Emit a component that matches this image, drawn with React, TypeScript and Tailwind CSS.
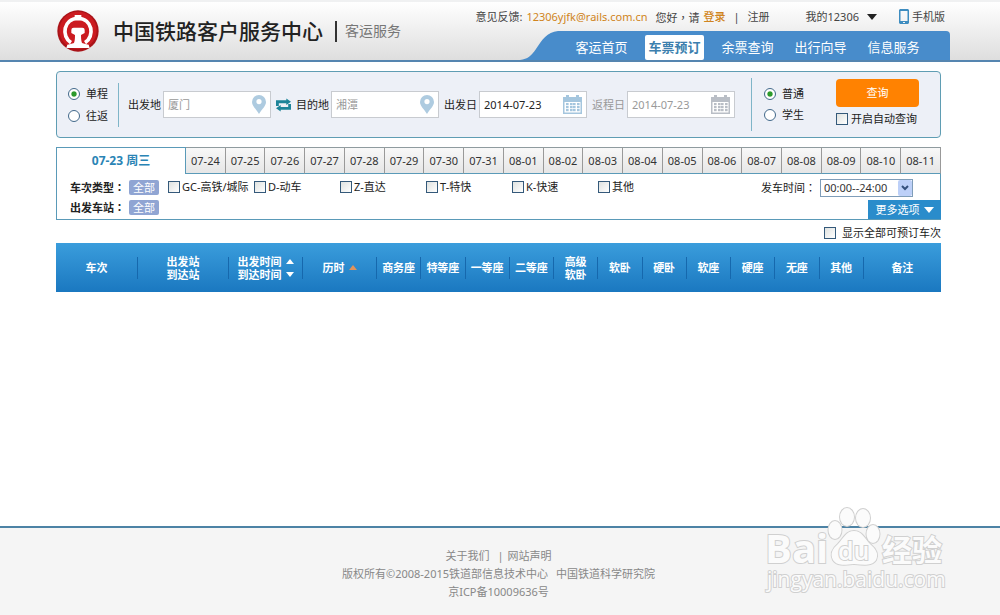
import { useState } from "react";
import type { ReactNode } from "react";

const navItems = ["客运首页", "车票预订", "余票查询", "出行向导", "信息服务"];

const dates = [
  "07-24", "07-25", "07-26", "07-27", "07-28", "07-29", "07-30",
  "07-31", "08-01", "08-02", "08-03", "08-04", "08-05", "08-06",
  "08-07", "08-08", "08-09", "08-10", "08-11",
];

const trainTypes = ["GC-高铁/城际", "D-动车", "Z-直达", "T-特快", "K-快速", "其他"];

const seats = [
  ["商务座"], ["特等座"], ["一等座"], ["二等座"], ["高级", "软卧"],
  ["软卧"], ["硬卧"], ["软座"], ["硬座"], ["无座"], ["其他"],
];

function Logo() {
  return (
    <svg viewBox="0 0 126 126" className="size-[42px] shrink-0" role="img" aria-label="中国铁路">
      <circle cx="63" cy="63" r="62" fill="#a91318" />
      <circle cx="63" cy="61" r="56" fill="#cb1b20" />
      <path d="M53 15h20v9H53z" fill="#fff" />
      <path d="M42 98C12 79 19 26 63 25C107 26 114 79 84 98" fill="none" stroke="#fff" strokeWidth="11" />
      <path d="M43 60q0-7 7-7h26q7 0 7 7v9l-11 6q0 17 3 24l20 6H31l20-6q3-7 3-24l-11-6z" fill="#fff" />
      <path d="M31 104h64l3 10H28z" fill="#fff" />
    </svg>
  );
}

function PinIcon() {
  return (
    <svg viewBox="0 0 14 20" className="h-5 w-[14px] shrink-0" fill="#aecbe0">
      <path fillRule="evenodd" d="M7 0a7 7 0 0 1 7 7c0 4-4 7-7 12C4 14 0 11 0 7a7 7 0 0 1 7-7zm0 4a2.600 2.600 0 1 0 0 5.200A2.600 2.600 0 0 0 7 4z" />
    </svg>
  );
}

function CalendarIcon({ muted = false }: { muted?: boolean }) {
  return (
    <svg viewBox="0 0 19 19" className="size-[19px] shrink-0" fill={muted ? "#b9bec6" : "#a5c6de"}>
      <path fillRule="evenodd" d="M0 2h3V0h3v2h7V0h3v2h3v17H0zM1.500 7v10.500h16V7z" />
      {[8, 11, 14].map((y) =>
        [3, 7, 10, 14].map((x) => <rect key={`${x}-${y}`} x={x} y={y} width="2.600" height="2.200" />)
      )}
    </svg>
  );
}

type FieldProps = {
  id: string;
  label: string;
  value: string;
  icon: ReactNode;
  labelClass?: string;
  inputClass?: string;
};

function Field({ id, label, value, icon, labelClass = "", inputClass = "text-[#999]" }: FieldProps) {
  return (
    <div className="flex min-w-0 flex-1 items-center gap-[2px]">
      <label htmlFor={id} className={`shrink-0 ${labelClass}`}>{label}</label>
      <div className="flex h-[27px] min-w-0 flex-1 items-center border border-[#c8cbd0] bg-white pr-1 pl-1">
        <input id={id} defaultValue={value} className={`w-full min-w-0 flex-1 bg-transparent outline-none ${inputClass}`} />
        {icon}
      </div>
    </div>
  );
}

function Radio({ name, label, checked = false }: { name: string; label: string; checked?: boolean }) {
  return (
    <label className="flex items-center gap-[6px]">
      <input
        type="radio"
        name={name}
        defaultChecked={checked}
        className="size-3 appearance-none rounded-full border border-[#41688a] bg-white checked:bg-[radial-gradient(circle,#2c9a2c_30%,#fff_45%)]"
      />
      {label}
    </label>
  );
}

function Checkbox({ label, className = "gap-[3px]" }: { label: string; className?: string }) {
  return (
    <label className={`flex items-center whitespace-nowrap ${className}`}>
      <input
        type="checkbox"
        className="size-3 shrink-0 appearance-none border border-[#34597a] bg-linear-to-br from-[#dfe2e0] to-white checked:bg-[#2c9a2c]"
      />
      {label}
    </label>
  );
}

function Header() {
  return (
    <header className="flex h-[62px] justify-between border-t-2 border-b-2 border-t-[#f0f1f2] border-b-[#5585b0] bg-linear-to-b from-white to-[#dedede] pr-[50px] pl-[57px]">
      <div className="flex items-center">
        <Logo />
        <h1 className="ml-[14px] text-[21px] leading-7 font-medium whitespace-nowrap text-[#222]">中国铁路客户服务中心</h1>
        <span className="ml-3 h-[21px] w-[2px] bg-[#333]" />
        <span className="ml-2 text-[14px] whitespace-nowrap text-[#777]">客运服务</span>
      </div>

      <div className="flex flex-col items-end justify-between">
        <div className="flex h-[29px] items-center pr-[5px] whitespace-nowrap text-[#444]">
          <span>意见反馈:</span>
          <a href="#mail" className="ml-1 text-[#d08420]">12306yjfk@rails.com.cn</a>
          <span className="ml-2 font-['Noto_Sans_CJK_TC',sans-serif]">您好，请</span>
          <a href="#login" className="ml-1 font-medium text-[#d08420]">登录</a>
          <span className="mx-2">|</span>
          <a href="#register">注册</a>
          <button type="button" className="ml-9 flex items-center gap-2">
            我的12306
            <svg viewBox="0 0 10 6" className="h-[6px] w-[10px]"><path d="M0 0h10L5 6z" fill="#222" /></svg>
          </button>
          <a href="#mobile" className="ml-[22px] flex items-center gap-[3px]">
            <svg viewBox="0 0 10 15" className="h-[15px] w-[10px]">
              <path fillRule="evenodd" d="M1 0h8l1 1v13l-1 1H1l-1-1V1zM1.500 2v10h7V2zM4 13h2v1H4z" fill="#3e8dc0" />
            </svg>
            手机版
          </a>
        </div>

        <nav className="flex h-[29px]">
          <svg viewBox="0 0 38 29" className="h-[29px] w-[38px]">
            <path d="M0 29C8 28 11 25 16 18C22 9 27 1 38 0V29z" fill="#488ccb" />
          </svg>
          <ul className="flex items-center rounded-tr bg-[#488ccb] pt-[3px] pr-5 pl-[7px] text-[13px]">
            {navItems.map((item, i) => (
              <li key={item} className="flex w-[73px] justify-center">
                <a
                  href="#nav"
                  className={i === 1 ? "rounded-xs bg-white px-[3px] leading-[25px] font-bold text-[#3c7fae]" : "leading-[25px] text-white"}
                >
                  {item}
                </a>
              </li>
            ))}
          </ul>
        </nav>
      </div>
    </header>
  );
}

function SearchPanel() {
  return (
    <form className="mt-[9px] flex h-[67px] items-center rounded border border-[#5f9db3] bg-[#edf0f7] pr-[21px] pl-[11px] whitespace-nowrap">
      <div className="flex flex-col gap-[6px] pr-[10px]">
        <Radio name="trip" label="单程" checked />
        <Radio name="trip" label="往返" />
      </div>
      <div className="mr-[9px] h-11 w-px bg-[#7fb5c8]" />

      <div className="flex min-w-0 flex-1 items-center gap-[5px]">
        <Field id="from" label="出发地" value="厦门" icon={<PinIcon />} />
        <button type="button" aria-label="交换" className="shrink-0">
          <svg viewBox="0 0 16 14" className="h-[14px] w-[15px]" fill="#1d8499">
            <path d="M0 8V2h11V0l5 3.500L11 7V5H3v3z" />
            <path d="M16 6v6H5v2l-5-3.500L5 7v2h8V6z" />
          </svg>
        </button>
        <Field id="to" label="目的地" value="湘潭" icon={<PinIcon />} />
        <Field id="depart" label="出发日" value="2014-07-23" icon={<CalendarIcon />} inputClass="text-[#222]" />
        <Field id="return" label="返程日" value="2014-07-23" icon={<CalendarIcon muted />} labelClass="text-[#999]" />
      </div>

      <div className="ml-4 h-[53px] w-px bg-[#7fb5c8]" />
      <div className="ml-3 flex flex-col gap-[5px]">
        <Radio name="passenger" label="普通" checked />
        <Radio name="passenger" label="学生" />
      </div>
      <div className="mb-1 ml-8 flex min-w-[83px] flex-col gap-1">
        <button type="button" className="h-7 w-full rounded bg-[#ff8201] text-white">查询</button>
        <Checkbox label="开启自动查询" />
      </div>
    </form>
  );
}

function Filters() {
  const [day, setDay] = useState("07-23 周三");

  return (
    <section className="mt-[9px] border border-t-0 border-[#5a9ab8]">
      <div className="-mx-px flex">
        <button
          type="button"
          onClick={() => setDay("07-23 周三")}
          className="h-[27px] w-[130px] shrink-0 border border-b-0 border-[#5a9ab8] text-[12px] font-bold text-[#2a84b5]"
        >
          {day}
        </button>
        {dates.map((date) => (
          <button
            key={date}
            type="button"
            onClick={() => setDay(date)}
            className="h-[27px] min-w-0 flex-1 border-t border-r border-b border-t-[#8f9b9f] border-r-[#999] border-b-[#5a9ab8] bg-linear-to-b from-[#f8f8f8] to-[#e6e6e6] text-[#333]"
          >
            {date}
          </button>
        ))}
      </div>

      <div className="flex h-[45px] justify-between">
        <div className="flex flex-col gap-1 pt-[5px] pl-[13px]">
          <div className="flex items-center">
            <span className="w-[59px] font-['Noto_Sans_CJK_TC',sans-serif] font-bold">车次类型：</span>
            <button type="button" className="w-[30px] rounded-xs bg-[#90a5d3] leading-[15px] text-white">全部</button>
            <div className="ml-[9px] flex">
              {trainTypes.map((type) => (
                <div key={type} className="w-[86px]">
                  <Checkbox label={type} className="gap-[2px]" />
                </div>
              ))}
            </div>
          </div>
          <div className="flex items-center">
            <span className="w-[59px] font-['Noto_Sans_CJK_TC',sans-serif] font-bold">出发车站：</span>
            <button type="button" className="w-[30px] rounded-xs bg-[#90a5d3] leading-[15px] text-white">全部</button>
          </div>
        </div>

        <div className="flex flex-col items-end justify-between pt-[5px]">
          <div className="mr-[27px] flex items-start gap-1">
            <label htmlFor="time" className="font-['Noto_Sans_CJK_TC',sans-serif] whitespace-nowrap">发车时间：</label>
            <div className="relative">
              <select id="time" className="h-[18px] w-[93px] appearance-none border border-[#7f9db9] bg-white pl-[3px] text-[#333]">
                <option>00:00--24:00</option>
              </select>
              <span className="pointer-events-none absolute top-px right-px flex h-4 w-[14px] items-center justify-center rounded-xs bg-[#bdd0f8]">
                <svg viewBox="0 0 8 6" className="h-[6px] w-2"><path d="M1 1l3 3 3-3" fill="none" stroke="#34507c" strokeWidth="2" /></svg>
              </span>
            </div>
          </div>
          <button type="button" className="-mr-px flex h-[19px] w-[73px] items-center justify-center gap-1 bg-[#2a8ccb] text-white">
            更多选项
            <svg viewBox="0 0 10 6" className="h-[6px] w-[10px]"><path d="M0 0h10L5 6z" fill="#fff" /></svg>
          </button>
        </div>
      </div>
    </section>
  );
}

type HeadCellProps = { lines: string[]; className?: string; icon?: ReactNode; last?: boolean };

// Célula do cabeçalho com a linha divisória curta à direita
function HeadCell({ lines, className = "", icon, last = false }: HeadCellProps) {
  return (
    <th className={`p-0 ${className}`}>
      <div className={`flex h-[22px] items-center justify-center gap-1 leading-[13px] whitespace-nowrap ${last ? "" : "border-r border-[#1668ad]"}`}>
        <div>
          {lines.map((line) => <div key={line} className="h-[13px]">{line}</div>)}
        </div>
        {icon}
      </div>
    </th>
  );
}

function TrainTable() {
  return (
    <table className="w-full table-fixed bg-linear-to-b from-[#3a9ddc] to-[#1a78c0]">
      <thead>
        <tr className="h-[49px] font-bold text-white">
          <HeadCell className="w-[82px]" lines={["车次"]} />
          <HeadCell className="w-[91px]" lines={["出发站", "到达站"]} />
          <HeadCell
            className="w-[74px]"
            lines={["出发时间", "到达时间"]}
            icon={<svg viewBox="0 0 8 18" className="h-[18px] w-2" fill="#fff"><path d="M0 5h8L4 0z" /><path d="M0 13h8l-4 5z" /></svg>}
          />
          <HeadCell
            className="w-[74px]"
            lines={["历时"]}
            icon={<svg viewBox="0 0 8 5" className="h-[5px] w-2"><path d="M0 5h8L4 0z" fill="#e0935c" /></svg>}
          />
          {seats.map((seat) => (
            <HeadCell key={seat.join("")} className="w-[5%]" lines={seat} />
          ))}
          <HeadCell lines={["备注"]} last />
        </tr>
      </thead>
      <tbody />
    </table>
  );
}

function Watermark() {
  return (
    <svg
      viewBox="0 0 260 115"
      className="pointer-events-none absolute right-0 bottom-0 h-[115px] w-[260px]"
      fill="#fbfbfb"
      stroke="#d0d0d0"
      strokeWidth="2"
      paintOrder="stroke"
      fontFamily="'Open Sans', 'Noto Sans CJK SC', sans-serif"
    >
      <text x="25" y="63" fontSize="40" fontWeight="700">Bai</text>
      <g strokeWidth="2">
        <path d="M114 31C122 31 125 39 130 44C136 49 139 54 136 60C132 66 124 65 114 64C104 65 97 66 93 60C90 54 92 49 98 44C103 39 106 31 114 31z" />
        <ellipse cx="95" cy="30" rx="6.500" ry="9" />
        <ellipse cx="107" cy="17" rx="7" ry="9" />
        <ellipse cx="123" cy="18" rx="7" ry="9" />
        <ellipse cx="133" cy="34" rx="6.500" ry="9" />
      </g>
      <text x="98" y="60" fontSize="25" fontWeight="600">du</text>
      <text x="142" y="61" fontSize="30" fontWeight="700">经验</text>
      <text x="27" y="87" fontSize="21">jingyan.baidu.com</text>
    </svg>
  );
}

function Footer() {
  return (
    <footer className="relative mt-auto border-t-2 border-[#4d83a5] bg-[#f5f5f5] pt-[19px] pr-[3px] pb-[14px] text-center leading-[18px] text-[#888]">
      <p>
        <a href="#about" className="mr-2">关于我们</a>|<a href="#notice" className="ml-1">网站声明</a>
      </p>
      <p>
        <span className="mr-2">版权所有©2008-2015铁道部信息技术中心</span>
        <span>中国铁道科学研究院</span>
      </p>
      <p>京ICP备10009636号</p>
      <Watermark />
    </footer>
  );
}

export default function App() {
  return (
    <div className="flex min-h-screen flex-col bg-white font-['Noto_Sans','Noto_Sans_CJK_SC',sans-serif] text-[11px] leading-4 text-[#222]">
      <Header />
      <main className="pr-[59px] pb-6 pl-14">
        <SearchPanel />
        <Filters />
        <div className="flex h-[23px] items-center justify-end pt-[3px]">
          <Checkbox label="显示全部可预订车次" className="gap-[6px]" />
        </div>
        <TrainTable />
      </main>
      <Footer />
    </div>
  );
}
